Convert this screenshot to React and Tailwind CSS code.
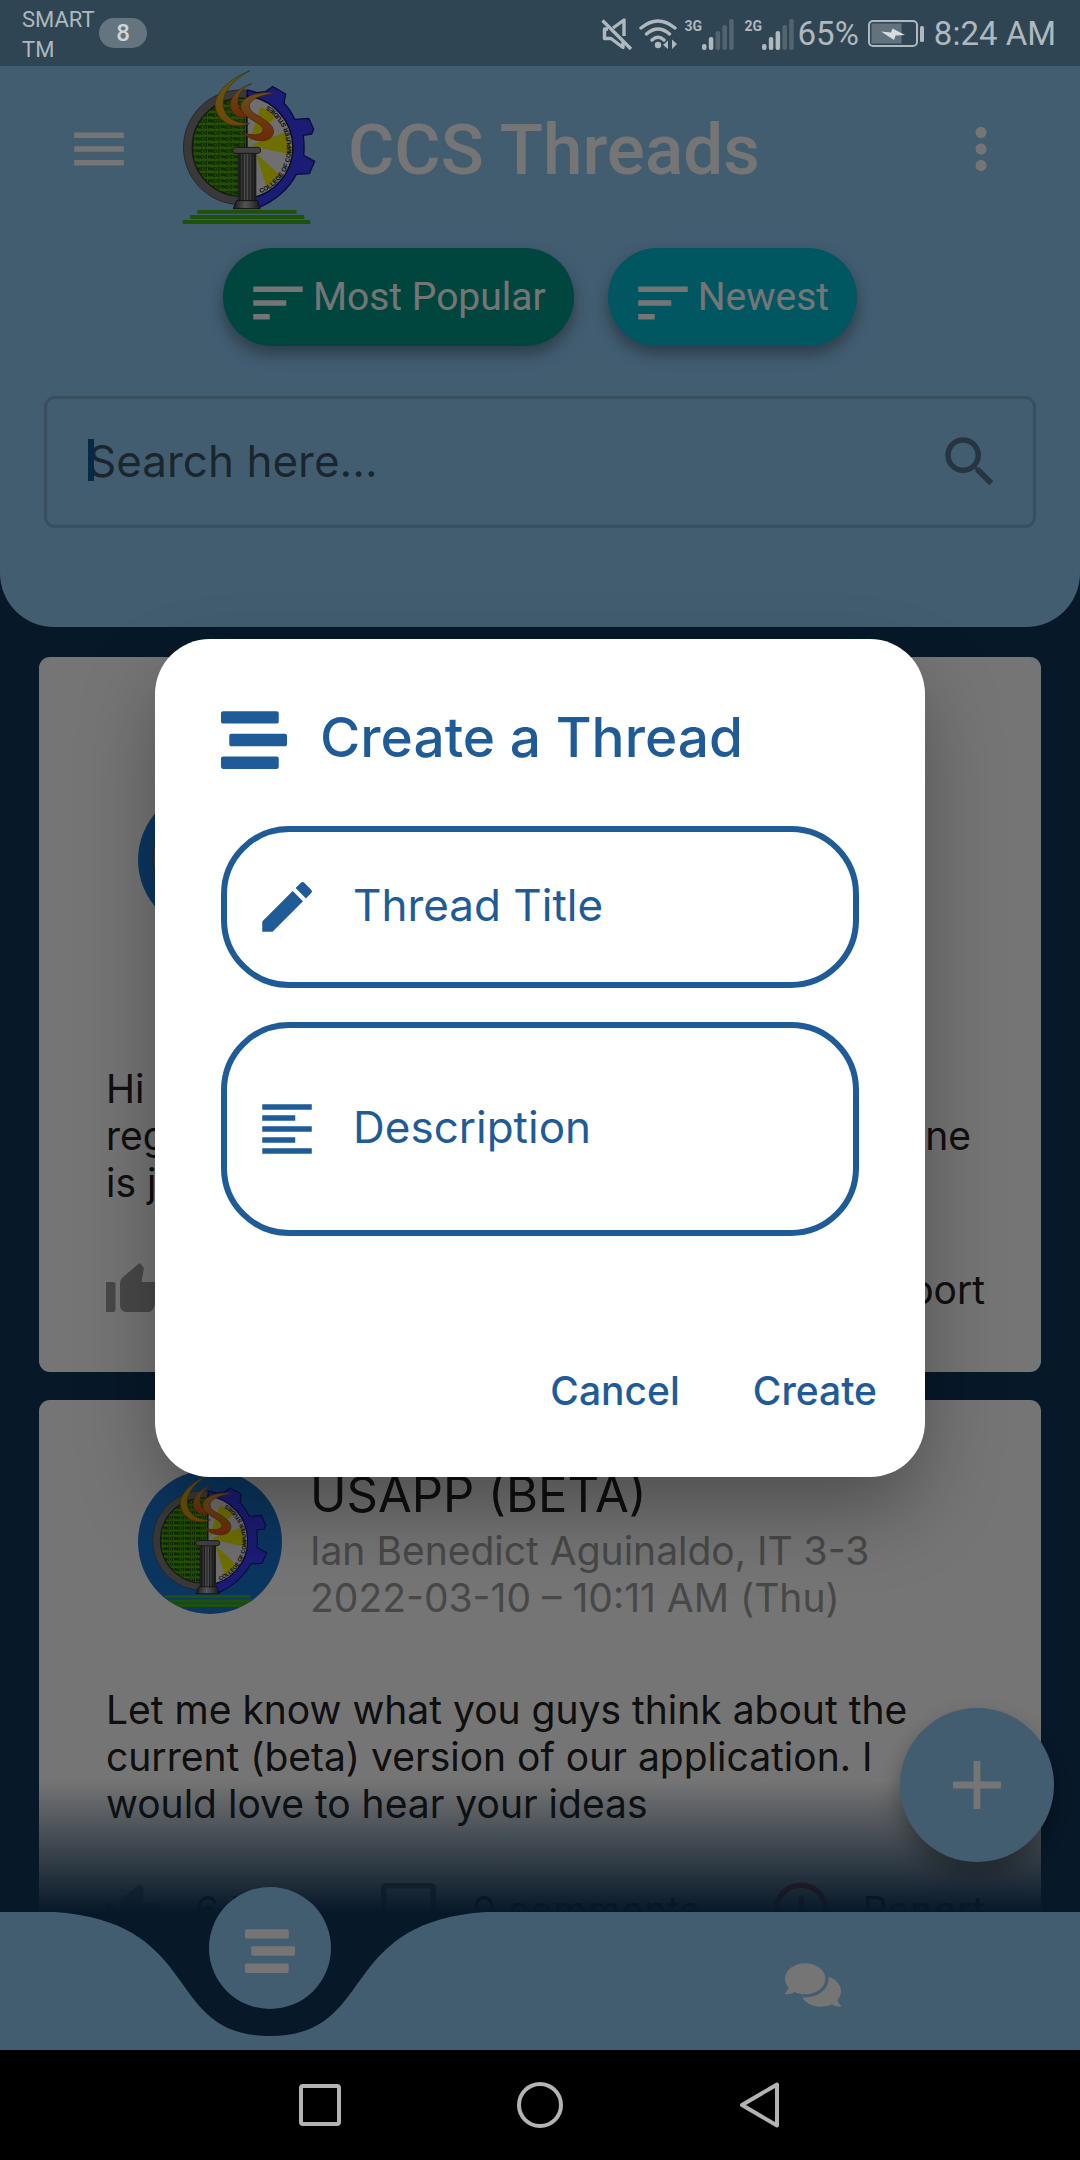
import React from "react";
import {
  MdMenu,
  MdMoreVert,
  MdSort,
  MdSearch,
  MdEdit,
  MdFormatAlignLeft,
  MdAdd,
  MdErrorOutline,
} from "react-icons/md";
import { FaStream, FaComments } from "react-icons/fa";

const ROBOTO = "font-[Roboto,sans-serif]";

/* College emblem: half seal, half gear, with a torch and steps. */
function Emblem({ className }) {
  const id = React.useId();
  return (
    <svg viewBox="0 6 480 498" className={className} aria-hidden="true">
      <defs>
        <pattern id={`${id}code`} width="38" height="18" patternUnits="userSpaceOnUse">
          <path
            d="M2 4v9M6 13V4l6 9V4M22 5h-5v8h5M26 4v9M30 4h5M33 4v9h-4"
            fill="none"
            stroke="#0c2a00"
            strokeWidth="2.500"
          />
        </pattern>
        <linearGradient id={`${id}f1`} x1="0" y1="0" x2="0" y2="1">
          <stop offset="0" stopColor="#d8c020" />
          <stop offset="1" stopColor="#f09a10" />
        </linearGradient>
        <linearGradient id={`${id}f2`} x1="0" y1="0" x2="0" y2="1">
          <stop offset="0" stopColor="#e8a840" />
          <stop offset="1" stopColor="#f05a10" />
        </linearGradient>
        <linearGradient id={`${id}p`} x1="0" y1="0" x2="1" y2="0">
          <stop offset="0" stopColor="#3a3a3a" />
          <stop offset="0.45" stopColor="#b8b8b8" />
          <stop offset="1" stopColor="#3a3a3a" />
        </linearGradient>
      </defs>
      <path d="M231 79A172 172 0 1 0 231 421Z" fill="#7c7c7c" stroke="#555" strokeWidth="3" />
      <path d="M231 104A147 147 0 1 0 231 396Z" fill="#4fae0c" stroke="#333" strokeWidth="4" />
      <path d="M231 104A147 147 0 1 0 231 396Z" fill={`url(#${id}code)`} />
      <path
        d="M232 78L262 86L288 82L308 68L347 90L342 118Q362 138 374 166L416 163L431 196L425 210L400 214Q404 250 401 274L434 292L418 329L379 331Q345 395 268 430L232 430Z"
        fill="#3b3dff"
        stroke="#1c1c80"
        strokeWidth="4"
        strokeLinejoin="round"
      />
      <path d="M231 96A155 155 0 0 1 231 404Z" fill="#f2f2f2" stroke="#15154a" strokeWidth="4" />
      <path
        d="M236 238L272 128A140 140 0 0 1 318 158ZM244 242L346 205A140 140 0 0 1 364 272L262 250ZM258 268L330 334A150 150 0 0 1 290 372Z"
        fill="#f2f200"
      />
      <path id={`${id}arc`} d="M266 390A148 148 0 0 0 262 110" fill="none" />
      <text fontSize="19" fontWeight="700" fill="#111" fontFamily="Liberation Sans, sans-serif">
        <textPath href={`#${id}arc`} startOffset="6">
          COLLEGE OF COMPUTER STUDIES
        </textPath>
      </text>
      <path
        d="M240 20C175 45 125 95 137 135C150 182 200 196 240 178C200 178 165 165 160 125C156 85 190 45 240 20Z"
        fill={`url(#${id}f1)`}
        stroke="#8a5a10"
        strokeWidth="2"
      />
      <path
        d="M245 59C200 72 168 110 186 142C200 164 225 166 243 150C222 150 207 140 204 118C202 95 215 72 245 59Z"
        fill={`url(#${id}f2)`}
        stroke="#8a5a10"
        strokeWidth="2"
      />
      <path
        d="M315 88C270 80 215 95 212 127C211 163 282 176 279 198C273 218 240 214 218 205C243 234 290 238 305 218C326 188 285 168 252 148C222 125 240 97 315 88Z"
        fill={`url(#${id}f2)`}
        stroke="#8a4a10"
        strokeWidth="2"
      />
      <rect x="203" y="266" width="56" height="146" fill={`url(#${id}p)`} />
      <path
        d="M210 268v142M219 268v142M228 268v142M237 268v142M246 268v142M254 268v142"
        stroke="#2c2c2c"
        strokeWidth="3"
      />
      <rect x="188" y="250" width="84" height="18" rx="9" fill="#8e8e8e" stroke="#333" strokeWidth="3" />
      <path d="M200 410H262L270 434H190Z" fill={`url(#${id}p)`} stroke="#222" strokeWidth="3" />
      <rect x="82" y="438" width="298" height="11" rx="3" fill="#3fb01c" />
      <rect x="60" y="453" width="343" height="12" rx="3" fill="#3fb01c" />
      <rect x="38" y="468" width="383" height="12" rx="3" fill="#3fb01c" />
    </svg>
  );
}

function Signal({ label, level }) {
  const tops = [25, 18, 12, 6, 0];
  return (
    <div className="flex items-start">
      <span className="mr-px w-4 text-[14px] leading-[14px] font-bold">{label}</span>
      <svg viewBox="0 0 32 31" className="h-[31px] w-8" fill="currentColor" aria-hidden="true">
        {tops.map((y, i) => (
          <rect
            key={y}
            x={i * 6.8}
            y={y}
            width="4.5"
            height={31 - y}
            rx="2"
            opacity={i < level ? 1 : 0.28}
          />
        ))}
      </svg>
    </div>
  );
}

function StatusBar() {
  return (
    <div
      className={`relative z-20 flex h-[66px] shrink-0 items-center justify-between bg-[#304553] pr-6 pl-[22px] text-[#aeb8be] ${ROBOTO}`}
    >
      <div className="flex items-center gap-1">
        <div className="w-[73px] pt-1 text-[22px] leading-[30px]">
          SMART
          <br />
          TM
        </div>
        <div className="flex h-[30px] w-12 items-center justify-center rounded-full bg-[#64757f] text-[24px] leading-[30px] font-medium text-[#cdd5d9]">
          8
        </div>
      </div>
      <div className="flex items-center pt-0.5">
        <svg viewBox="0 0 32 32" className="mr-1.5 h-8 w-8" fill="none" stroke="currentColor" strokeWidth="3.4" aria-hidden="true">
          <path d="M1.500 2.500L30 31" />
          <path d="M12 10L23 2V18M7 11H3.500V20.500H10L22 29.500V24" strokeLinejoin="round" />
        </svg>
        <svg viewBox="0 0 38 32" className="mr-2 h-8 w-[38px]" fill="none" stroke="currentColor" strokeWidth="3.400" aria-hidden="true">
          <path d="M2 10Q19 -4 36 10M7.500 16Q19 6 30.500 16M13 22Q19 16.500 25 22" strokeLinecap="round" />
          <circle cx="19" cy="27" r="3.200" fill="currentColor" stroke="none" />
          <path d="M24 27L29 22.500V31ZM38 26L33 21.500V31Z" fill="currentColor" stroke="none" />
        </svg>
        <Signal label="3G" level={2} />
        <div className="w-[11px]" />
        <Signal label="2G" level={3} />
        <span className="ml-1 text-[33px] leading-[40px]">65%</span>
        <svg viewBox="0 0 56 28" className="ml-[9px] h-7 w-14" fill="none" aria-hidden="true">
          <rect x="1" y="1" width="48" height="25" rx="4" stroke="currentColor" strokeWidth="2" />
          <rect x="3.500" y="3.500" width="30" height="20" fill="currentColor" opacity="0.4" />
          <rect x="52" y="6" width="4" height="16" rx="1.500" fill="currentColor" />
          <path d="M13 11.500L23 12.500L24.500 8.500L37 15L27.500 15.500L26 20Z" fill="#d6dcdf" />
        </svg>
        <span className="ml-2.5 text-[33px] leading-[40px]">8:24 AM</span>
      </div>
    </div>
  );
}

function Chip({ color, children }) {
  return (
    <button
      type="button"
      className={`flex h-[98px] items-center rounded-full pr-7 pl-[22px] text-[39px] leading-[48px] text-white shadow-[0_8px_16px_rgba(0,0,0,0.35)] ${color} ${ROBOTO}`}
    >
      <MdSort className="mr-0.5 box-content size-[66px] pt-3" />
      {children}
    </button>
  );
}

function Header() {
  return (
    <header className="shrink-0 rounded-b-[54px] bg-[#90caf5] px-11 pb-[99px]">
      <div className="flex h-[166px] items-center px-[22px] text-white">
        <button type="button" aria-label="Menu">
          <MdMenu className="size-[66px]" />
        </button>
        <Emblem className="ml-[38px] h-[166px] w-40" />
        <h1 className={`ml-[18px] flex-1 pt-0.5 text-[71px] leading-[84px] font-medium whitespace-nowrap ${ROBOTO}`}>
          CCS Threads
        </h1>
        <button type="button" aria-label="More options">
          <MdMoreVert className="size-[66px]" />
        </button>
      </div>
      <div className="mt-4 flex justify-center gap-[34px]">
        <Chip color="bg-[#009688]">Most Popular</Chip>
        <Chip color="bg-[#00bcd4]">Newest</Chip>
      </div>
      <div className="relative mt-[50px] flex h-[132px] items-center rounded-[11px] border-[3px] border-black/15 pr-[30px] pl-[41px]">
        <span className="absolute left-[41px] h-[42px] w-1.5 -translate-y-0.5 bg-[#0f5b9a]" />
        <input
          type="text"
          aria-label="Search"
          placeholder="Search here..."
          className="min-w-0 flex-1 pb-0.5 text-[44px] leading-[54px] outline-none placeholder:text-black/60"
        />
        <button type="button" aria-label="Search" className="text-black/42">
          <MdSearch className="size-[66px]" />
        </button>
      </div>
    </header>
  );
}

function ThumbUp() {
  return (
    <svg viewBox="0 0 55 49" className="box-content h-[49px] w-[55px] pb-1 text-[#9e9e9e]" fill="currentColor" aria-hidden="true">
      <path d="M0 19H7a2.500 2.500 0 0 1 2.500 2.500V46.500a2.500 2.500 0 0 1 -2.500 2.500H0Z" />
      <path d="M14 20q0 -3 2.500 -5.500L33.500 0l3 3q1.500 1.500 1.200 3.500L35.500 19H51a4 4 0 0 1 4 4v3q0 1 -.5 2.500L47.500 45q-1.500 4 -5.500 4H20a6 6 0 0 1 -6 -6Z" />
    </svg>
  );
}

function CommentBox() {
  return (
    <svg viewBox="0 0 55 55" className="size-[55px] text-[#757575]" fill="none" stroke="currentColor" strokeWidth="5.500" strokeLinejoin="round" aria-hidden="true">
      <path d="M2.750 5.500a2.750 2.750 0 0 1 2.750 -2.750H49.500a2.750 2.750 0 0 1 2.750 2.750V39H11L2.750 48Z" />
    </svg>
  );
}

function Action({ icon, gap, children }) {
  return (
    <button type="button" className={`flex items-center ${gap}`}>
      {icon}
      {children}
    </button>
  );
}

function Card({ headerHeight, head, body, likes, comments }) {
  return (
    <article className="shrink-0 rounded-[11px] bg-white pt-16 pr-14 pb-[50px] pl-[67px] text-[39px] leading-[47px] text-[#212121]">
      <div className={`flex items-center gap-7 pl-8 ${headerHeight}`}>
        <div className="flex size-36 shrink-0 items-center justify-center overflow-hidden rounded-full bg-[#1976d2]">
          <Emblem className="h-36 w-[139px] shrink-0" />
        </div>
        {head}
      </div>
      <div className="mt-[66px]">{body}</div>
      <div className="mt-[50px] flex h-[66px] items-center justify-between">
        <Action icon={<ThumbUp />} gap="gap-[34px]">{likes}</Action>
        {comments && (
          <Action icon={<CommentBox />} gap="gap-9">{comments}</Action>
        )}
        <Action icon={<MdErrorOutline className="size-[66px] text-[#f44336]" />} gap="gap-7">
          Report
        </Action>
      </div>
    </article>
  );
}

function Feed() {
  return (
    <section className="relative flex min-h-0 flex-1 flex-col gap-7 overflow-hidden px-[39px] pt-[30px]">
      <Card
        headerHeight="h-[278px]"
        body={
          <>
            <p>Hi</p>
            <p className="flex justify-between pr-3.5">
              <span>reg</span>
              <span>ne</span>
            </p>
            <p>is j</p>
          </>
        }
      />
      <Card
        headerHeight="h-[156px]"
        head={
          <div>
            <h2 className="text-[49px] leading-[64px]">USAPP (BETA)</h2>
            <p className="text-[#9e9e9e]">Ian Benedict Aguinaldo, IT 3-3</p>
            <p className="text-[#9e9e9e]">2022-03-10 – 10:11 AM (Thu)</p>
          </div>
        }
        body={
          <p>
            Let me know what you guys think about the
            <br />
            current (beta) version of our application. I
            <br />
            would love to hear your ideas
          </p>
        }
        likes="6 likes"
        comments="9 comments"
      />
      <div className="pointer-events-none absolute inset-x-0 bottom-0 h-[132px] bg-linear-to-b from-[#11365a]/0 to-[#11365a]" />
    </section>
  );
}

function BottomNav() {
  return (
    <nav className="relative grid h-[138px] shrink-0 grid-cols-2 text-white">
      <svg viewBox="0 0 1080 138" preserveAspectRatio="none" className="absolute inset-0 h-full w-full" aria-hidden="true">
        <path
          d="M0 0H54C205 10 162 124 270 124C378 124 335 10 486 0H1080V138H0Z"
          fill="#90caf5"
        />
      </svg>
      <div className="relative flex justify-center">
        <button
          type="button"
          aria-label="Threads"
          className="-mt-[25px] flex size-[122px] items-center justify-center rounded-full bg-[#90caf5] pt-1.5"
        >
          <FaStream className="size-[50px]" />
        </button>
      </div>
      <div className="relative flex items-center justify-center pt-2">
        <button type="button" aria-label="Messages" className="w-[50px]">
          <FaComments className="h-[50px] w-14 max-w-none" />
        </button>
      </div>
    </nav>
  );
}

function Field({ icon, label, height, multiline }) {
  const Tag = multiline ? "textarea" : "input";
  return (
    <label
      className={`flex items-center gap-[33px] rounded-[68px] border-[6px] border-[#1f5c97] pr-8 pl-[27px] ${height}`}
    >
      {icon}
      <Tag
        aria-label={label}
        placeholder={label}
        rows={multiline ? 1 : undefined}
        className="box-content h-[54px] min-w-0 flex-1 resize-none pb-1 text-[44px] leading-[54px] outline-none placeholder:text-[#1f5c97]"
      />
    </label>
  );
}

function CreateDialog() {
  return (
    <div className="absolute inset-0 z-10 flex items-center justify-center bg-black/54 px-[155px]">
      <form
        role="dialog"
        aria-label="Create a Thread"
        className="w-full rounded-[55px] bg-white px-[66px] pt-[66px] pb-[62px] text-[#1f5c97] shadow-[0_36px_80px_-6px_rgba(0,0,0,0.34)]"
      >
        <div className="flex h-[70px] items-center gap-[33px]">
          <FaStream className="size-[66px]" />
          <h2 className="pb-1.5 text-[55px] leading-[64px] font-medium whitespace-nowrap">Create a Thread</h2>
        </div>
        <div className="mt-[51px] flex flex-col gap-[34px]">
          <Field icon={<MdEdit className="size-[66px] shrink-0" />} label="Thread Title" height="h-[162px]" />
          <Field
            icon={<MdFormatAlignLeft className="size-[66px] shrink-0" />}
            label="Description"
            height="h-[214px]"
            multiline
          />
        </div>
        <div className="-mr-[18px] mt-[131px] flex justify-end gap-[73px] text-[39px] leading-[48px] font-medium">
          <button type="button">Cancel</button>
          <button type="submit">Create</button>
        </div>
      </form>
    </div>
  );
}

function SystemNav() {
  return (
    <div className="relative z-20 flex h-[110px] shrink-0 items-center justify-center gap-[174px] bg-black text-[#b3b3b3]">
      <button type="button" aria-label="Recent apps">
        <svg viewBox="0 0 46 46" className="size-[46px]" fill="none" stroke="currentColor" strokeWidth="4">
          <rect x="4" y="4" width="38" height="38" rx="2" />
        </svg>
      </button>
      <button type="button" aria-label="Home">
        <svg viewBox="0 0 46 46" className="size-[46px]" fill="none" stroke="currentColor" strokeWidth="4">
          <circle cx="23" cy="23" r="21" />
        </svg>
      </button>
      <button type="button" aria-label="Back">
        <svg viewBox="0 0 46 46" className="size-[46px]" fill="none" stroke="currentColor" strokeWidth="4" strokeLinejoin="round">
          <path d="M5 23L40 2.500V43.500Z" />
        </svg>
      </button>
    </div>
  );
}

export default function App() {
  return (
    <div className="flex h-screen flex-col overflow-hidden bg-[#11365a] font-[Inter,sans-serif]">
      <StatusBar />
      <main className="relative flex min-h-0 flex-1 flex-col">
        <Header />
        <Feed />
        <BottomNav />
        <button
          type="button"
          aria-label="New thread"
          className="absolute right-[26px] bottom-[188px] flex size-[154px] items-center justify-center rounded-full bg-[#90caf5] text-white shadow-[0_12px_24px_rgba(0,0,0,0.35)]"
        >
          <MdAdd className="size-[82px]" />
        </button>
        <CreateDialog />
      </main>
      <SystemNav />
    </div>
  );
}
